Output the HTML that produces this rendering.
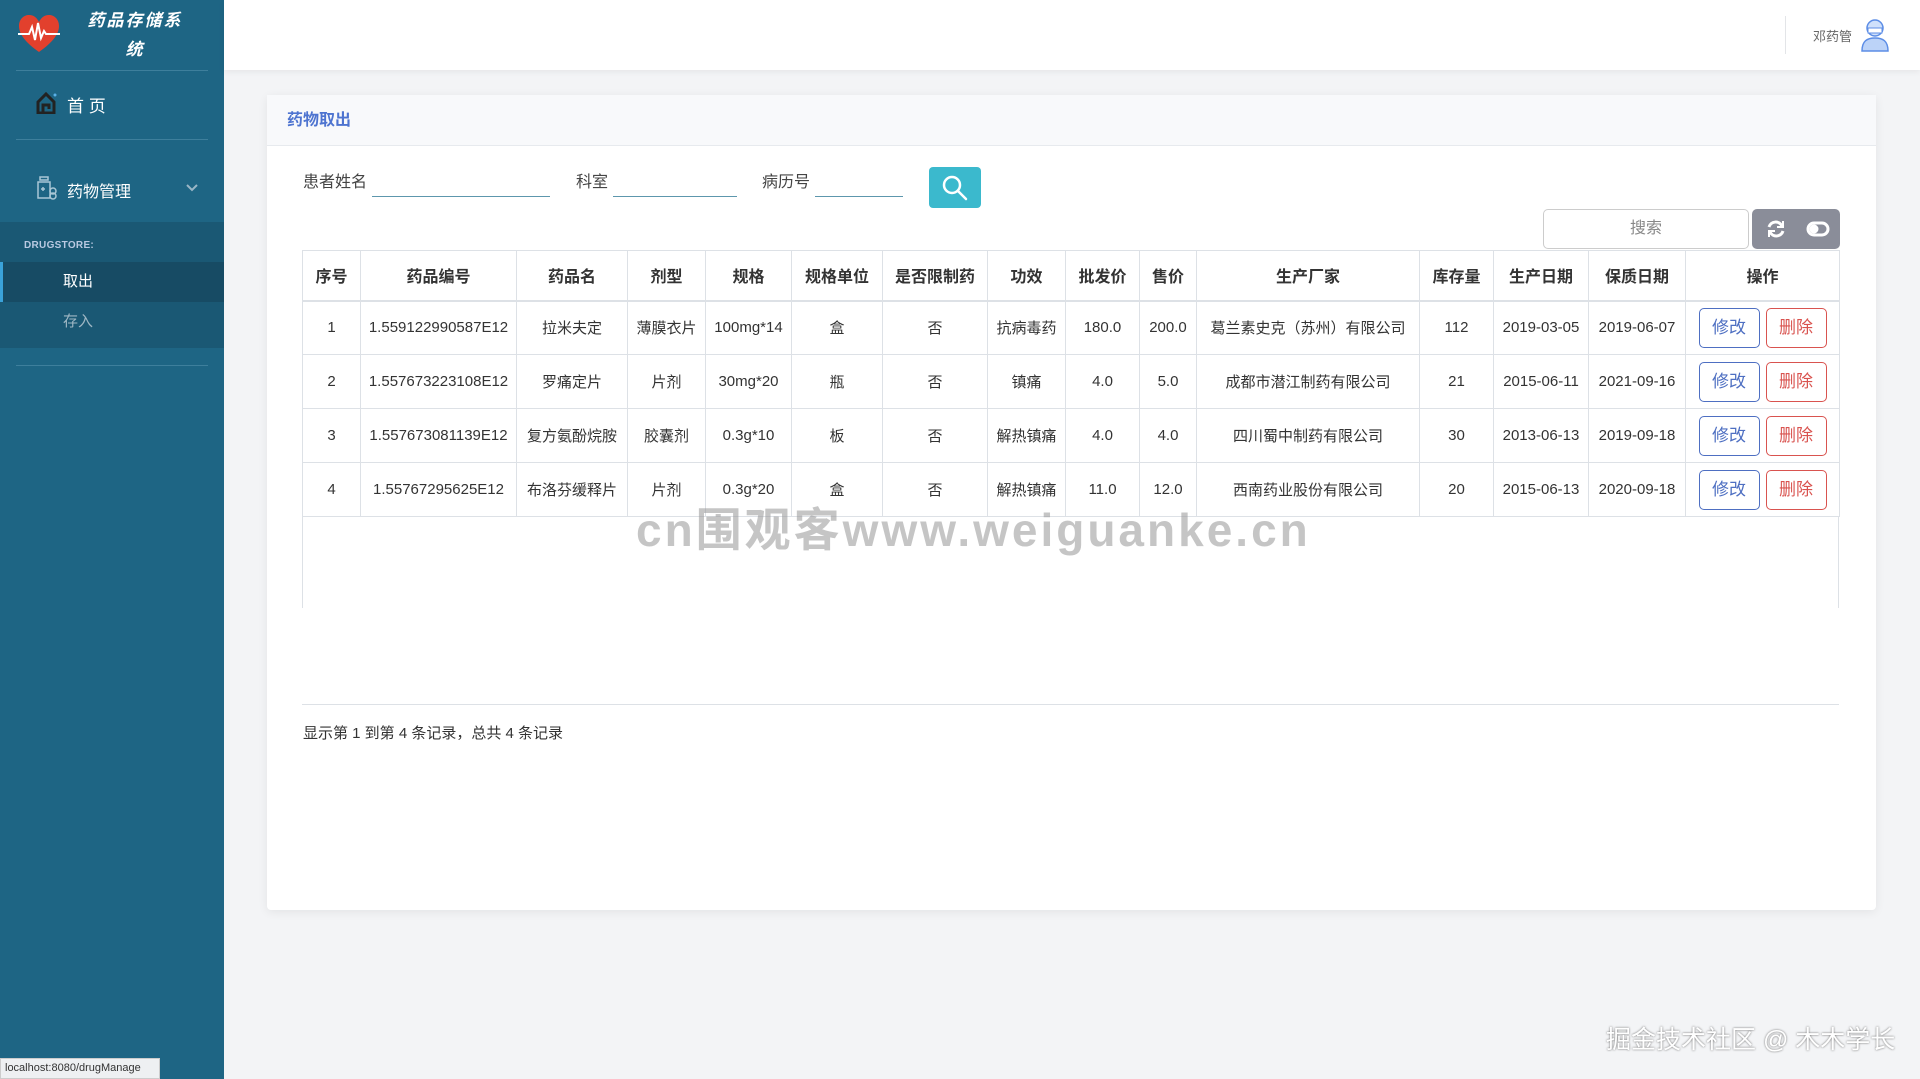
<!DOCTYPE html>
<html><head><meta charset="utf-8"><style>
*{margin:0;padding:0;box-sizing:border-box}
body{width:1920px;height:1079px;overflow:hidden;background:#f3f4f6;font-family:"Liberation Sans","Noto Sans CJK SC",sans-serif;color:#333;position:relative}
.side{position:absolute;left:0;top:0;width:224px;height:1079px;background:#1e6584}
.logo{position:absolute;left:80px;top:6px;width:110px;color:#fff;font-weight:bold;font-size:17px;text-align:center;line-height:29px;font-style:italic;letter-spacing:2px}
.hr{position:absolute;left:16px;width:192px;height:1px;background:#3e7f9c}
.nav{position:absolute;color:#fff;font-size:17px}
.sub{position:absolute;left:0;top:222px;width:224px;height:126px;background:#1a5874}
.sub .ds{position:absolute;left:24px;top:18px;font-size:10px;font-weight:bold;color:#b9c9e2;letter-spacing:.3px}
.sub .act{position:absolute;left:0;top:40px;width:224px;height:40px;background:#174b64;border-left:3px solid #3aa2d9;color:#fff;font-size:15px;line-height:40px;padding-left:60px}
.sub .in{position:absolute;left:63px;top:88px;font-size:15px;color:#9fb7c4}
.top{position:absolute;left:224px;top:0;width:1696px;height:70px;background:#fff;box-shadow:0 2px 6px rgba(0,0,0,.06)}
.card{position:absolute;left:267px;top:95px;width:1609px;height:815px;background:#fff;border-radius:4px;box-shadow:0 2px 10px rgba(0,0,0,.07)}
.ch{height:51px;background:#f8f9fb;border-bottom:1px solid #e7eaee;color:#4e74d0;font-size:16px;font-weight:bold;line-height:51px;padding-left:20px}
.lbl{position:absolute;top:73px;font-size:16px;color:#444}
.ln{position:absolute;top:101px;height:1px;background:#5d97ad}
table{position:absolute;left:35px;top:155px;border-collapse:collapse;font-size:15px;table-layout:fixed}
td,th{border:1px solid #dde1e6;text-align:center;height:54px;color:#333;white-space:nowrap;overflow:hidden}
th{height:50px;font-weight:bold;font-size:16px;border-bottom:2px solid #dde1e6}
.b{display:inline-block;width:61px;height:40px;border-radius:5px;line-height:38px;font-size:17px;margin:0 3px}
.bm{border:1px solid #4e6fc2;color:#4e6fc2}.bd{border:1px solid #d9534f;color:#d9534f}
</style></head><body>
<div class="side">
<svg style="position:absolute;left:17px;top:14px" width="44" height="40" viewBox="0 0 44 40"><path d="M22 38 C8 28 2 20 2 12 C2 5 7 1 12 1 C17 1 20 4 22 8 C24 4 27 1 32 1 C37 1 42 5 42 12 C42 20 36 28 22 38Z" fill="#e2402d"/><path d="M1 20 H12 L15 13 L18 26 L21 9 L24 24 L27 17 L29 20 H43" fill="none" stroke="#fff" stroke-width="2"/></svg>
<div class="logo">药品存储系统</div>
<div class="hr" style="top:70px"></div>
<svg style="position:absolute;left:36px;top:92px" width="21" height="22" viewBox="0 0 21 22"><path d="M2 10 L10 2 L18 10 V21 H2Z M7 21 V13 H13 V17" fill="none" stroke="#222" stroke-width="3"/><circle cx="19" cy="3" r="1.5" fill="#5ab0e6"/></svg>
<div class="nav" style="left:67px;top:92px">首 页</div>
<div class="hr" style="top:139px"></div>
<svg style="position:absolute;left:35px;top:176px" width="24" height="24" viewBox="0 0 24 24" fill="none" stroke="#a9c7d6" stroke-width="1.5"><rect x="5" y="1" width="8" height="3"/><path d="M3 6 H15 V22 H3Z"/><path d="M6 13 H10 M8 11 V15"/><circle cx="18" cy="15" r="3"/><circle cx="18" cy="20" r="3"/></svg>
<div class="nav" style="left:67px;top:178px;font-size:16px">药物管理</div>
<svg style="position:absolute;left:186px;top:184px" width="12" height="8" viewBox="0 0 12 8"><path d="M1 1 L6 6 L11 1" fill="none" stroke="#9ab6c6" stroke-width="2"/></svg>
<div class="sub"><div class="ds">DRUGSTORE:</div><div class="act">取出</div><div class="in">存入</div></div>
<div class="hr" style="top:365px"></div>
<div style="position:absolute;left:0;top:1058px;width:160px;height:21px;background:#eef0f2;border:1px solid #ccc;font-size:11px;color:#333;line-height:19px;padding-left:4px">localhost:8080/drugManage</div>
</div>
<div class="top">
<div style="position:absolute;left:1561px;top:16px;width:1px;height:38px;background:#e3e5e8"></div>
<div style="position:absolute;left:1589px;top:26px;font-size:13px;color:#666">邓药管</div>
<svg style="position:absolute;left:1637px;top:18px" width="28" height="34" viewBox="0 0 28 34"><circle cx="14" cy="10" r="8" fill="#cfe0fb" stroke="#5c8de6" stroke-width="1.5"/><rect x="7" y="10" width="14" height="5" fill="#fff" stroke="#5c8de6"/><path d="M1 33 C1 23 6 20 14 20 C22 20 27 23 27 33Z" fill="#bcd3f8" stroke="#5c8de6" stroke-width="1.5"/></svg>
</div>
<div class="card">
<div class="ch">药物取出</div>
<div class="lbl" style="left:36px">患者姓名</div><div class="ln" style="left:105px;width:178px"></div>
<div class="lbl" style="left:309px">科室</div><div class="ln" style="left:346px;width:124px"></div>
<div class="lbl" style="left:495px">病历号</div><div class="ln" style="left:548px;width:88px"></div>
<div style="position:absolute;left:662px;top:72px;width:52px;height:41px;background:#3bb9cd;border-radius:4px"><svg style="position:absolute;left:12px;top:7px" width="28" height="28" viewBox="0 0 28 28" fill="none" stroke="#fff" stroke-width="2.5"><circle cx="11" cy="11" r="8"/><path d="M17 17 L25 25" stroke-linecap="round"/></svg></div>
<div style="position:absolute;left:1276px;top:114px;width:206px;height:40px;border:1px solid #ccc;border-radius:5px;text-align:center;line-height:38px;color:#888;font-size:16px">搜索</div>
<div style="position:absolute;left:1485px;top:114px;width:88px;height:40px;background:#8a8d99;border-radius:5px"><svg style="position:absolute;left:14px;top:10px" width="20" height="20" viewBox="0 0 20 20" fill="none" stroke="#fff" stroke-width="3"><path d="M16 7 A7 7 0 0 0 3 8 M4 13 A7 7 0 0 0 17 12"/><path d="M17 2 V8 H11 M3 18 V12 H9" stroke-width="2"/></svg><svg style="position:absolute;left:54px;top:12px" width="24" height="16" viewBox="0 0 24 16" fill="none" stroke="#fff" stroke-width="3"><rect x="2" y="2" width="20" height="12" rx="6"/><circle cx="8" cy="8" r="3" fill="#fff"/></svg></div>
<table>
<colgroup><col style="width:58px"><col style="width:156px"><col style="width:111px"><col style="width:78px"><col style="width:86px"><col style="width:91px"><col style="width:105px"><col style="width:78px"><col style="width:74px"><col style="width:57px"><col style="width:223px"><col style="width:74px"><col style="width:95px"><col style="width:97px"><col style="width:154px"></colgroup>
<tr><th>序号</th><th>药品编号</th><th>药品名</th><th>剂型</th><th>规格</th><th>规格单位</th><th>是否限制药</th><th>功效</th><th>批发价</th><th>售价</th><th>生产厂家</th><th>库存量</th><th>生产日期</th><th>保质日期</th><th>操作</th></tr>
<tr><td>1</td><td>1.559122990587E12</td><td>拉米夫定</td><td>薄膜衣片</td><td>100mg*14</td><td>盒</td><td>否</td><td>抗病毒药</td><td>180.0</td><td>200.0</td><td>葛兰素史克（苏州）有限公司</td><td>112</td><td>2019-03-05</td><td>2019-06-07</td><td><span class="b bm">修改</span><span class="b bd">删除</span></td></tr>
<tr><td>2</td><td>1.557673223108E12</td><td>罗痛定片</td><td>片剂</td><td>30mg*20</td><td>瓶</td><td>否</td><td>镇痛</td><td>4.0</td><td>5.0</td><td>成都市潜江制药有限公司</td><td>21</td><td>2015-06-11</td><td>2021-09-16</td><td><span class="b bm">修改</span><span class="b bd">删除</span></td></tr>
<tr><td>3</td><td>1.557673081139E12</td><td>复方氨酚烷胺</td><td>胶囊剂</td><td>0.3g*10</td><td>板</td><td>否</td><td>解热镇痛</td><td>4.0</td><td>4.0</td><td>四川蜀中制药有限公司</td><td>30</td><td>2013-06-13</td><td>2019-09-18</td><td><span class="b bm">修改</span><span class="b bd">删除</span></td></tr>
<tr><td>4</td><td>1.55767295625E12</td><td>布洛芬缓释片</td><td>片剂</td><td>0.3g*20</td><td>盒</td><td>否</td><td>解热镇痛</td><td>11.0</td><td>12.0</td><td>西南药业股份有限公司</td><td>20</td><td>2015-06-13</td><td>2020-09-18</td><td><span class="b bm">修改</span><span class="b bd">删除</span></td></tr>
</table>
<div style="position:absolute;left:35px;top:422px;width:1px;height:91px;background:#dde1e6"></div>
<div style="position:absolute;left:1571px;top:422px;width:1px;height:91px;background:#dde1e6"></div>
<div style="position:absolute;left:35px;top:609px;width:1537px;height:1px;background:#dde1e6"></div>
<div style="position:absolute;left:36px;top:627px;font-size:15px;color:#333">显示第 1 到第 4 条记录，总共 4 条记录</div>
</div>
<div style="position:absolute;left:636px;top:494px;font-size:46px;font-weight:bold;color:rgba(150,150,150,.55);letter-spacing:3px">cn围观客www.weiguanke.cn</div>
<div style="position:absolute;left:1606px;top:1020px;font-size:25px;color:#fff;text-shadow:0 0 2px #666">掘金技术社区 @ 木木学长</div>
</body></html>
